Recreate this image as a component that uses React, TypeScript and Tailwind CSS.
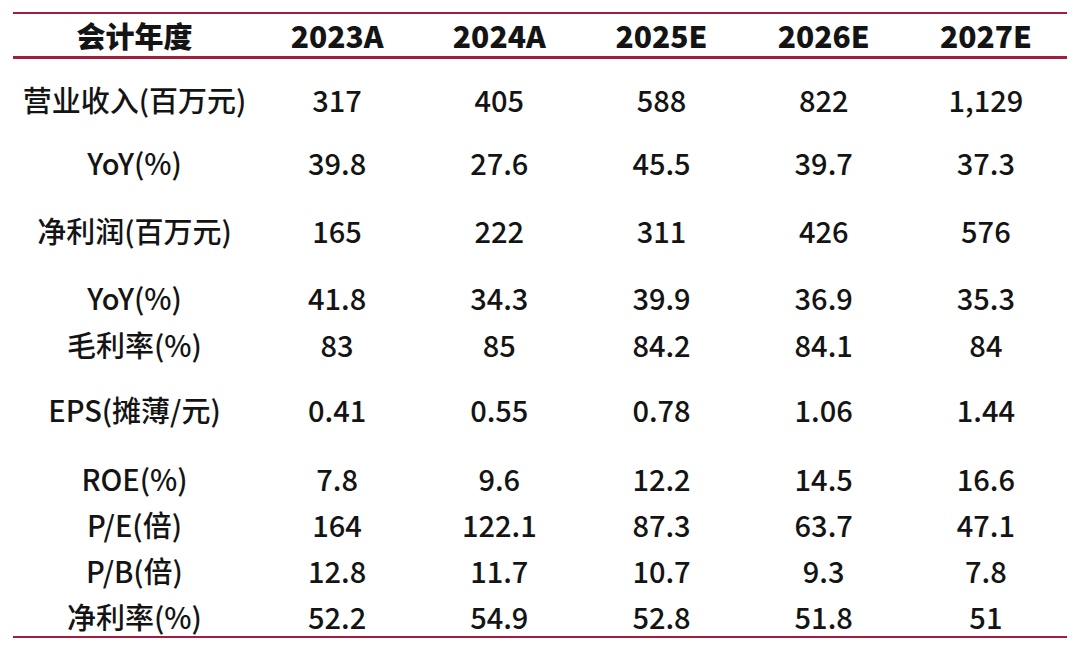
import React from 'react';

interface Row {
  label: string;
  values: string[];
  height: number;
}

const years = ['2023A', '2024A', '2025E', '2026E', '2027E'];

const rows: Row[] = [
  { label: '营业收入(百万元)', values: ['317', '405', '588', '822', '1,129'], height: 80 },
  { label: 'YoY(%)', values: ['39.8', '27.6', '45.5', '39.7', '37.3'], height: 46 },
  { label: '净利润(百万元)', values: ['165', '222', '311', '426', '576'], height: 90 },
  { label: 'YoY(%)', values: ['41.8', '34.3', '39.9', '36.9', '35.3'], height: 44 },
  { label: '毛利率(%)', values: ['83', '85', '84.2', '84.1', '84'], height: 50 },
  { label: 'EPS(摊薄/元)', values: ['0.41', '0.55', '0.78', '1.06', '1.44'], height: 80 },
  { label: 'ROE(%)', values: ['7.8', '9.6', '12.2', '14.5', '16.6'], height: 58 },
  { label: 'P/E(倍)', values: ['164', '122.1', '87.3', '63.7', '47.1'], height: 34 },
  { label: 'P/B(倍)', values: ['12.8', '11.7', '10.7', '9.3', '7.8'], height: 58 },
  { label: '净利率(%)', values: ['52.2', '54.9', '52.8', '51.8', '51'], height: 34 },
];

const gridCols = 'grid grid-cols-[243px_repeat(5,1fr)]';

export default function App() {
  return (
    <div
      className="w-[1080px] h-[653px] bg-white pt-[12px] pl-[13px]"
      style={{ fontFamily: '"Noto Sans CJK SC", "Noto Sans", sans-serif' }}
    >
      <div className="w-[1054px] text-[#141414]">
        {/* header */}
        <div className={`${gridCols} h-[47px] border-t-2 border-b-[3px] border-[#a31d3d]`}>
          <div className="flex items-center justify-center text-[29px] font-black leading-none">会计年度</div>
          {years.map((y) => (
            <div key={y} className="flex items-center justify-center text-[30px] font-black leading-none">
              {y}
            </div>
          ))}
        </div>

        {/* body */}
        <div className="border-b-2 border-[#a31d3d]">
          {rows.map((row, i) => (
            <div key={i} className={gridCols} style={{ height: row.height }}>
              <div className="flex items-center justify-center text-[29px] font-medium leading-none">{row.label}</div>
              {row.values.map((v, j) => (
                <div key={j} className="flex items-center justify-center text-[29px] font-medium leading-none">
                  {v}
                </div>
              ))}
            </div>
          ))}
          <div className="h-[3px]" />
        </div>
      </div>
    </div>
  );
}
